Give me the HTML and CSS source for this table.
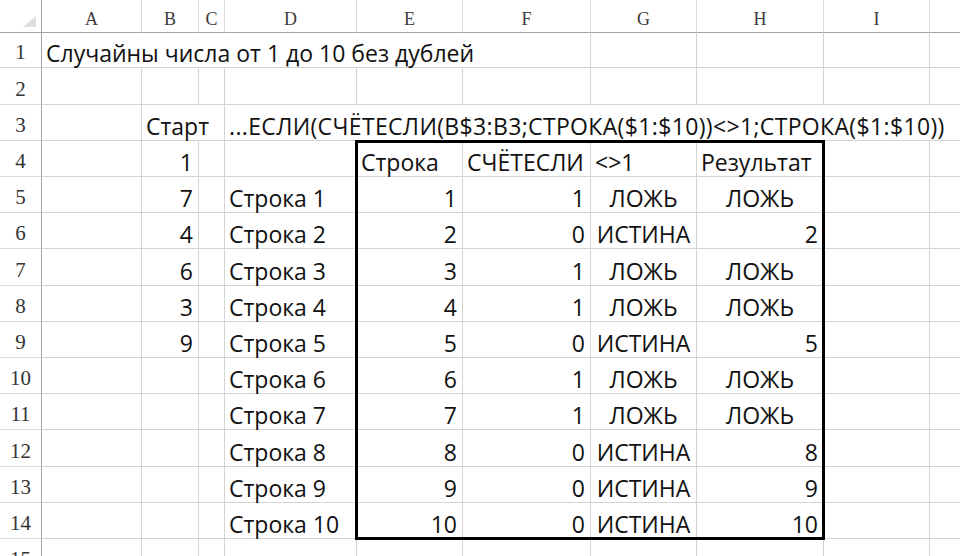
FILE: index.html
```html
<!DOCTYPE html>
<html lang="ru">
<head>
<meta charset="utf-8">
<title>Случайны числа</title>
<link rel="stylesheet" href="styles.css">
</head>
<body>
<div class="sheet">
  <div class="grid">
    <!-- header row -->
    <div class="corner"><span class="tri"></span></div>
    <div class="ch">A</div><div class="ch">B</div><div class="ch">C</div><div class="ch">D</div><div class="ch">E</div><div class="ch">F</div><div class="ch">G</div><div class="ch">H</div><div class="ch">I</div><div class="ch last"></div>

    <!-- 1 -->
    <div class="rh">1</div>
    <div class="c s6">Случайны числа от 1 до 10 без дублей</div>
    <div class="c"></div><div class="c"></div><div class="c"></div><div class="c last"></div>

    <!-- 2 -->
    <div class="rh">2</div>
    <div class="c"></div><div class="c"></div><div class="c"></div><div class="c"></div><div class="c"></div><div class="c"></div><div class="c"></div><div class="c"></div><div class="c"></div><div class="c last"></div>

    <!-- 3 -->
    <div class="rh">3</div>
    <div class="c"></div>
    <div class="c s2">Старт</div>
    <div class="c s7 last formula">...ЕСЛИ(СЧЁТЕСЛИ(B$3:B3;СТРОКА($1:$10))&lt;&gt;1;СТРОКА($1:$10))</div>

    <!-- 4 -->
    <div class="rh">4</div>
    <div class="c"></div><div class="c n">1</div><div class="c"></div><div class="c"></div>
    <div class="c">Строка</div><div class="c">СЧЁТЕСЛИ</div><div class="c">&lt;&gt;1</div><div class="c">Результат</div>
    <div class="c"></div><div class="c last"></div>

    <!-- 5 -->
    <div class="rh">5</div>
    <div class="c"></div><div class="c n">7</div><div class="c"></div><div class="c">Строка 1</div>
    <div class="c n">1</div><div class="c n">1</div><div class="c b">ЛОЖЬ</div><div class="c b">ЛОЖЬ</div>
    <div class="c"></div><div class="c last"></div>

    <!-- 6 -->
    <div class="rh">6</div>
    <div class="c"></div><div class="c n">4</div><div class="c"></div><div class="c">Строка 2</div>
    <div class="c n">2</div><div class="c n">0</div><div class="c b">ИСТИНА</div><div class="c n">2</div>
    <div class="c"></div><div class="c last"></div>

    <!-- 7 -->
    <div class="rh">7</div>
    <div class="c"></div><div class="c n">6</div><div class="c"></div><div class="c">Строка 3</div>
    <div class="c n">3</div><div class="c n">1</div><div class="c b">ЛОЖЬ</div><div class="c b">ЛОЖЬ</div>
    <div class="c"></div><div class="c last"></div>

    <!-- 8 -->
    <div class="rh">8</div>
    <div class="c"></div><div class="c n">3</div><div class="c"></div><div class="c">Строка 4</div>
    <div class="c n">4</div><div class="c n">1</div><div class="c b">ЛОЖЬ</div><div class="c b">ЛОЖЬ</div>
    <div class="c"></div><div class="c last"></div>

    <!-- 9 -->
    <div class="rh">9</div>
    <div class="c"></div><div class="c n">9</div><div class="c"></div><div class="c">Строка 5</div>
    <div class="c n">5</div><div class="c n">0</div><div class="c b">ИСТИНА</div><div class="c n">5</div>
    <div class="c"></div><div class="c last"></div>

    <!-- 10 -->
    <div class="rh">10</div>
    <div class="c"></div><div class="c"></div><div class="c"></div><div class="c">Строка 6</div>
    <div class="c n">6</div><div class="c n">1</div><div class="c b">ЛОЖЬ</div><div class="c b">ЛОЖЬ</div>
    <div class="c"></div><div class="c last"></div>

    <!-- 11 -->
    <div class="rh">11</div>
    <div class="c"></div><div class="c"></div><div class="c"></div><div class="c">Строка 7</div>
    <div class="c n">7</div><div class="c n">1</div><div class="c b">ЛОЖЬ</div><div class="c b">ЛОЖЬ</div>
    <div class="c"></div><div class="c last"></div>

    <!-- 12 -->
    <div class="rh">12</div>
    <div class="c"></div><div class="c"></div><div class="c"></div><div class="c">Строка 8</div>
    <div class="c n">8</div><div class="c n">0</div><div class="c b">ИСТИНА</div><div class="c n">8</div>
    <div class="c"></div><div class="c last"></div>

    <!-- 13 -->
    <div class="rh">13</div>
    <div class="c"></div><div class="c"></div><div class="c"></div><div class="c">Строка 9</div>
    <div class="c n">9</div><div class="c n">0</div><div class="c b">ИСТИНА</div><div class="c n">9</div>
    <div class="c"></div><div class="c last"></div>

    <!-- 14 -->
    <div class="rh">14</div>
    <div class="c"></div><div class="c"></div><div class="c"></div><div class="c">Строка 10</div>
    <div class="c n">10</div><div class="c n">0</div><div class="c b">ИСТИНА</div><div class="c n">10</div>
    <div class="c"></div><div class="c last"></div>

    <!-- 15 -->
    <div class="rh">15</div>
    <div class="c"></div><div class="c"></div><div class="c"></div><div class="c"></div><div class="c"></div><div class="c"></div><div class="c"></div><div class="c"></div><div class="c"></div><div class="c last"></div>
  </div>
  <div class="frame"></div>
</div>
</body>
</html>
```

FILE: styles.css
```css
* { box-sizing: border-box; }
html, body {
  margin: 0;
  padding: 0;
  background: #fff;
}
body {
  width: 960px;
  height: 556px;
  overflow: hidden;
}
.sheet {
  position: relative;
  width: 960px;
  height: 556px;
  overflow: hidden;
}
.grid {
  display: grid;
  grid-template-columns: 42px 100px 57px 26px 132px 106px 128px 106px 127px 106px 30px;
  grid-template-rows: 33px 35px 37px 36px 36px 36px 36px 37px 36px 36px 36px 36px 37px 36px 36px 36px;
}
.grid > div {
  border-right: 1px solid #d4d4d4;
  border-bottom: 1px solid #d4d4d4;
  white-space: nowrap;
  overflow: visible;
  min-width: 0;
}
.grid > .last { border-right: none; }

/* header row */
.corner {
  position: relative;
  border-bottom: 1px solid #a3a3a3 !important;
  border-right: 1px solid #a3a3a3 !important;
}
.tri {
  position: absolute;
  right: 5px;
  bottom: 5px;
  width: 0;
  height: 0;
  border-left: 13px solid transparent;
  border-bottom: 11px solid #dedede;
}
.ch {
  display: flex;
  justify-content: center;
  align-items: flex-end;
  padding-bottom: 3px;
  font-family: "Liberation Serif", "DejaVu Serif", serif;
  font-size: 18px;
  line-height: 20px;
  color: #3c3c3c;
  border-bottom: 1px solid #a3a3a3 !important;
  border-right-color: #d9d9d9 !important;
}

/* row headers */
.rh {
  display: flex;
  justify-content: center;
  align-items: flex-end;
  padding-bottom: 4px;
  font-family: "Liberation Serif", "DejaVu Serif", serif;
  font-size: 21px;
  line-height: 22px;
  color: #333;
  border-right: 1px solid #a3a3a3 !important;
  border-bottom-color: #dadada !important;
}

/* cells */
.c {
  display: flex;
  align-items: flex-end;
  padding: 0 5px 3px 4px;
  font-family: "Open Sans", "Noto Sans", sans-serif;
  font-size: 23px;
  line-height: 22px;
  color: #111;
}
.n { justify-content: flex-end; }
.b { justify-content: center; padding-left: 0; padding-right: 0; }
.s2 { grid-column: span 2; }
.s6 { grid-column: span 6; }
.s7 { grid-column: span 7; }
.formula { letter-spacing: 0.35px; }

/* thick outline around E4:H14 */
.frame {
  position: absolute;
  left: 355px;
  top: 140px;
  width: 470px;
  height: 400px;
  border: 3px solid #000;
  pointer-events: none;
}
```
